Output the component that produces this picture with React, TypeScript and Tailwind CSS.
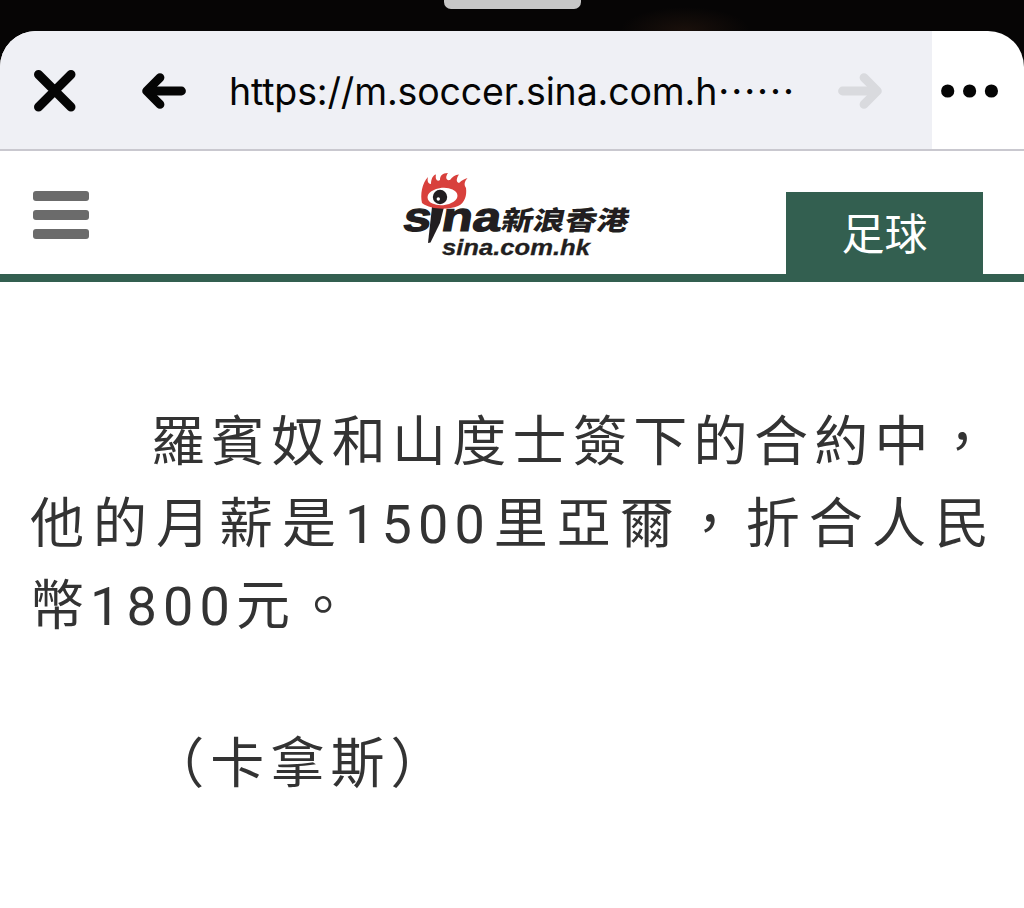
import type { ReactNode } from 'react';

interface ArrowIconProps {
  className?: string;
}

function ArrowIcon({ className = '' }: ArrowIconProps) {
  return (
    <svg width="44" height="36" viewBox="0 0 44 36" className={className} fill="currentColor" stroke="currentColor">
      <path
        d="M18 4.6 L4.6 18 L18 31.4"
        fill="none"
        strokeWidth="8.8"
        strokeLinecap="round"
        strokeLinejoin="round"
      />
      <path d="M5 18 L15 9 V27 Z" stroke="none" />
      <path d="M8 18 H39.5" strokeWidth="8.8" strokeLinecap="round" />
    </svg>
  );
}

function CloseIcon() {
  return (
    <svg width="42" height="42" viewBox="0 0 42 42" fill="none" stroke="currentColor">
      <path d="M4.5 4.5 L37 37 M37 4.5 L4.5 37" strokeWidth="9" strokeLinecap="round" />
    </svg>
  );
}

function MoreIcon() {
  return (
    <svg width="58" height="14" viewBox="0 0 58 14" fill="currentColor">
      <circle cx="6.7" cy="7" r="6.6" />
      <circle cx="28.6" cy="7" r="6.6" />
      <circle cx="50.4" cy="7" r="6.6" />
    </svg>
  );
}

function SinaLogo() {
  return (
    <svg width="230" height="90" viewBox="402 170 230 90" className="overflow-visible" fill="#221e20">
      <g fontFamily="Liberation Sans" fontWeight="700" stroke="#221e20" strokeWidth="1.2">
        <text transform="translate(402.5 231) skewX(-10)" fontSize="41" textLength="28" lengthAdjust="spacingAndGlyphs">
          s
        </text>
        <text transform="translate(441 231) skewX(-10)" fontSize="41" textLength="59" lengthAdjust="spacingAndGlyphs">
          na
        </text>
      </g>
      <path d="M433 207 L445 207 L441 223 L431.5 242.5 L429 243 Z" />
      {/* eye with flame lashes */}
      <path
        fill="#d8403c"
        d="M423 203 C421 195 423 183 429 177 C428 181 429 184 432 184 C432 179 434 175 437 174.5 C436 179 438 182 441 180 C441 176 443 173 449 173 C446 177 447 181 451 180 C453 177 456 174.5 460 174.5 C457 179 457 182 460 183 C463 180 466 179 468.5 178 C465 182 465 185 467 188 C468 195 466 203 459 206 C449 210 432 210 423 203 Z"
      />
      <ellipse cx="443.5" cy="196.5" rx="15" ry="8.8" fill="#fff" transform="rotate(-5 443.5 196.5)" />
      <circle cx="441" cy="197" r="7.2" />
      <circle cx="439.3" cy="199" r="1.7" fill="#fff" />
      <text
        transform="translate(501 229.5) skewX(-12)"
        fontFamily="Noto Sans CJK TC"
        fontWeight="900"
        fontSize="26.5"
        textLength="127"
        lengthAdjust="spacingAndGlyphs"
      >
        新浪香港
      </text>
      <text
        x="443"
        y="254.5"
        fontFamily="Liberation Sans"
        fontWeight="700"
        fontStyle="italic"
        fontSize="21.5"
        textLength="148"
        lengthAdjust="spacingAndGlyphs"
        stroke="#221e20"
        strokeWidth="0.3"
      >
        sina.com.hk
      </text>
    </svg>
  );
}

function BrowserBar() {
  return (
    <header className="flex h-[120px] overflow-hidden rounded-t-[36px] border-b-2 border-[#c9c8cf] bg-white text-[#050505]">
      <div className="flex w-[932px] items-center bg-[#eff0f5] pt-0.5 pl-[34px]">
        <button aria-label="Close">
          <CloseIcon />
        </button>
        <button aria-label="Back" className="ml-[66px]">
          <ArrowIcon />
        </button>
        <div className="ml-[43px] flex w-[609px] items-center pt-0.5 font-['Inter'] text-[37.5px] tracking-[-0.15px] whitespace-nowrap">
          <span>https://m.soccer.sina.com.h</span>
          <span className="pb-1.5 font-['Noto_Sans_CJK_TC'] text-[39px] leading-none">……</span>
        </div>
        <button aria-label="Forward" className="text-[#d9dade]">
          <ArrowIcon className="rotate-180" />
        </button>
      </div>
      <button aria-label="More" className="pt-0.5 pl-[9px]">
        <MoreIcon />
      </button>
    </header>
  );
}

function SiteHeader() {
  return (
    <div className="flex h-[131px] items-start justify-between border-b-8 border-[#335f50] pr-[41px] pl-[33px]">
      <button aria-label="Menu" className="mt-[40px] flex w-14 flex-col gap-[9px]">
        <span className="h-[10px] rounded-[3px] bg-[#6b6b6b]" />
        <span className="h-[10px] rounded-[3px] bg-[#6b6b6b]" />
        <span className="h-[10px] rounded-[3px] bg-[#6b6b6b]" />
      </button>
      <div className="mt-[19px] ml-[156px]">
        <SinaLogo />
      </div>
      <div className="mt-[41px] flex h-[82px] w-[197px] items-center justify-center bg-[#335f50] pb-1 font-['Noto_Sans_CJK_TC'] text-[43px] leading-none text-white">
        足球
      </div>
    </div>
  );
}

function Paragraph({ children }: { children: ReactNode }) {
  return (
    <p className="w-[965px] text-justify text-[54px] leading-[82px] tracking-[6.1px] [text-spacing-trim:space-all]">
      {'\u3000\u3000'}
      {children}
    </p>
  );
}

export default function App() {
  return (
    <div className="h-[908px] overflow-hidden bg-[#060505]" lang="zh-Hant">
      <div className="flex h-[31px] justify-center bg-[radial-gradient(ellipse_65px_24px_at_685px_31px,#1a100b,transparent)]">
        <div className="h-[9px] w-[137px] rounded-b-[7px] bg-[#c7c7c7]" />
      </div>
      <BrowserBar />
      <main className="h-[757px] bg-white">
        <SiteHeader />
        <article className="flex flex-col gap-[76px] pt-[120px] pl-[30px] font-['Roboto','Noto_Sans_CJK_TC',sans-serif] text-[#333]">
          <Paragraph>羅賓奴和山度士簽下的合約中，他的月薪是1500里亞爾，折合人民幣1800元。</Paragraph>
          <Paragraph>（卡拿斯）</Paragraph>
        </article>
      </main>
    </div>
  );
}
